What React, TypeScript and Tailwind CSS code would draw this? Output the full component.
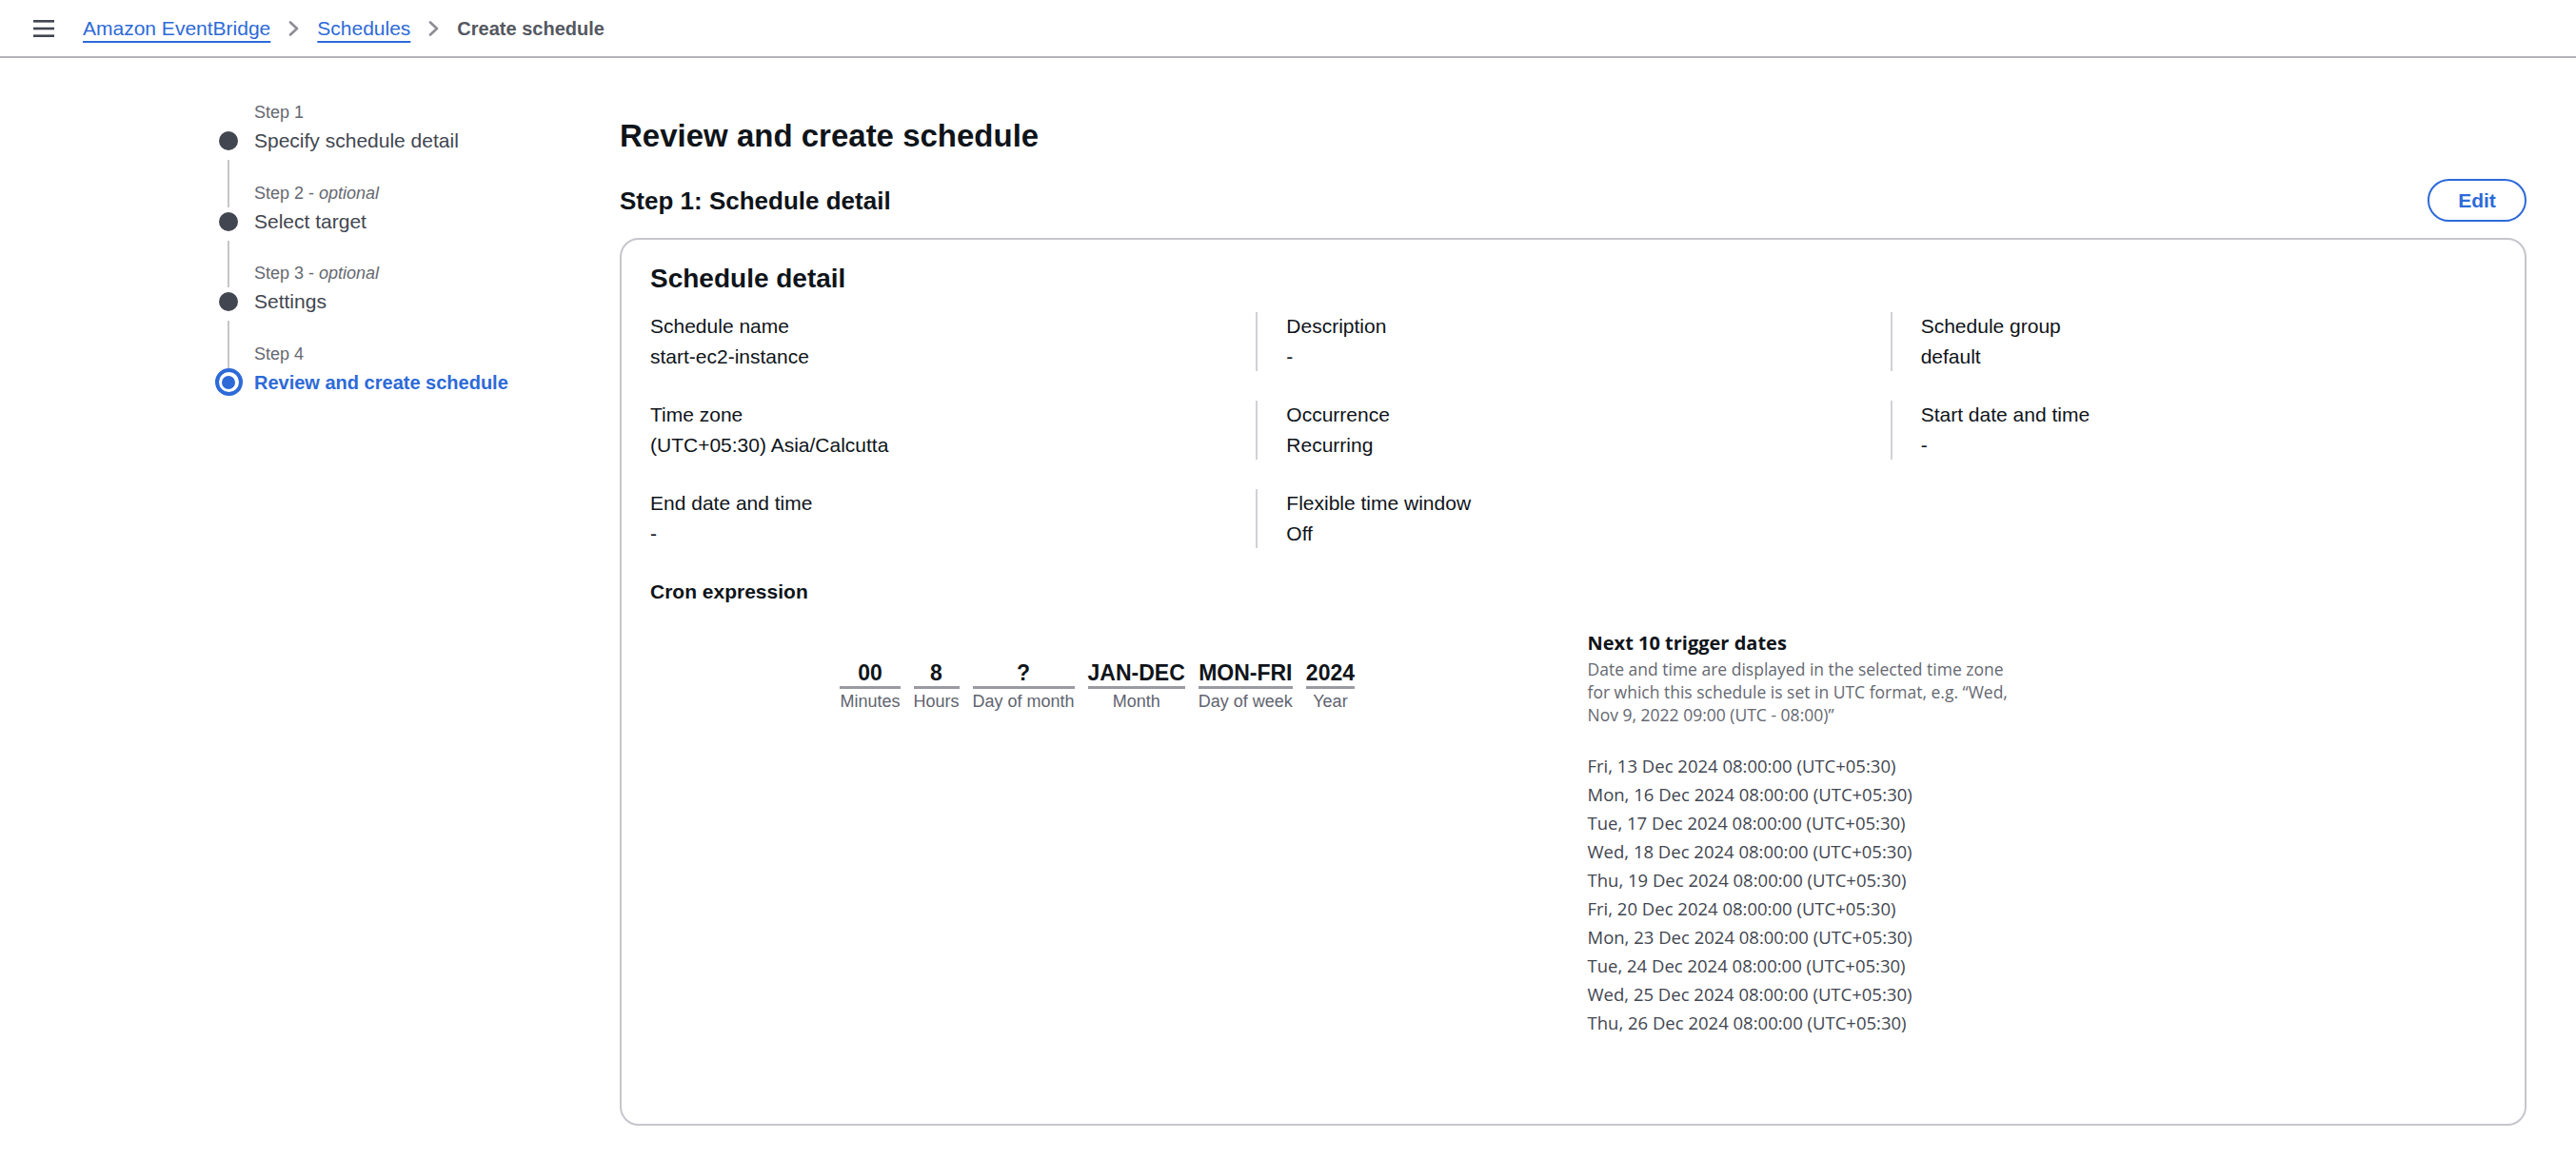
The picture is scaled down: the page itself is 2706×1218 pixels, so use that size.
import React from 'react';

type Step = { label: string; optional?: boolean; name: string; active?: boolean };

const steps: Step[] = [
  { label: 'Step 1', name: 'Specify schedule detail' },
  { label: 'Step 2', optional: true, name: 'Select target' },
  { label: 'Step 3', optional: true, name: 'Settings' },
  { label: 'Step 4', name: 'Review and create schedule', active: true },
];

const details = [
  { label: 'Schedule name', value: 'start-ec2-instance' },
  { label: 'Description', value: '-' },
  { label: 'Schedule group', value: 'default' },
  { label: 'Time zone', value: '(UTC+05:30) Asia/Calcutta' },
  { label: 'Occurrence', value: 'Recurring' },
  { label: 'Start date and time', value: '-' },
  { label: 'End date and time', value: '-' },
  { label: 'Flexible time window', value: 'Off' },
];

const cron = [
  { value: '00', label: 'Minutes' },
  { value: '8', label: 'Hours' },
  { value: '?', label: 'Day of month' },
  { value: 'JAN-DEC', label: 'Month' },
  { value: 'MON-FRI', label: 'Day of week' },
  { value: '2024', label: 'Year' },
];

const triggerDates = [
  'Fri, 13 Dec 2024 08:00:00 (UTC+05:30)',
  'Mon, 16 Dec 2024 08:00:00 (UTC+05:30)',
  'Tue, 17 Dec 2024 08:00:00 (UTC+05:30)',
  'Wed, 18 Dec 2024 08:00:00 (UTC+05:30)',
  'Thu, 19 Dec 2024 08:00:00 (UTC+05:30)',
  'Fri, 20 Dec 2024 08:00:00 (UTC+05:30)',
  'Mon, 23 Dec 2024 08:00:00 (UTC+05:30)',
  'Tue, 24 Dec 2024 08:00:00 (UTC+05:30)',
  'Wed, 25 Dec 2024 08:00:00 (UTC+05:30)',
  'Thu, 26 Dec 2024 08:00:00 (UTC+05:30)',
];

const Chevron = () => (
  <svg width="11" height="16" viewBox="0 0 11 16" fill="none" className="mx-[19px] shrink-0">
    <polyline points="2,1.5 9,8 2,14.5" stroke="#8d8d95" strokeWidth="2.6" strokeLinecap="round" strokeLinejoin="round" />
  </svg>
);

const Header = () => (
  <header className="flex h-[61px] items-center border-b-2 border-[#b4b4bb] pl-[35px]">
    <svg width="22" height="18" viewBox="0 0 22 18" className="mr-[30px] shrink-0">
      <rect x="0" y="0" width="22" height="2.6" fill="#414550" />
      <rect x="0" y="7.7" width="22" height="2.6" fill="#414550" />
      <rect x="0" y="15.4" width="22" height="2.6" fill="#414550" />
    </svg>
    <a className="text-[21px] leading-[30px] text-[#2d6ad8] underline decoration-2 underline-offset-[6px]">Amazon EventBridge</a>
    <Chevron />
    <a className="text-[21px] leading-[30px] text-[#2d6ad8] underline decoration-2 underline-offset-[6px]">Schedules</a>
    <Chevron />
    <span className="text-[20px] font-bold leading-[30px] text-[#545861]">Create schedule</span>
  </header>
);

const Steps = () => (
  <nav className="w-[426px] shrink-0 pt-[42px]">
    {steps.map((step, i) => (
      <div key={step.label} className="flex">
        {/* 点和连接线 */}
        <div className="flex w-[30px] shrink-0 flex-col items-center">
          <div className="flex h-[30px] justify-center">
            {i > 0 && <div className="h-full w-[2px] bg-[#c6c6cd]" />}
          </div>
          <div className="flex h-[30px] items-center justify-center">
            {step.active ? (
              <div className="flex h-[29px] w-[29px] items-center justify-center rounded-full border-[4px] border-[#2d6ad8]">
                <div className="h-[14px] w-[14px] rounded-full bg-[#2d6ad8]" />
              </div>
            ) : (
              <div className="h-[20px] w-[20px] rounded-full bg-[#424650]" />
            )}
          </div>
          <div className="flex flex-1 justify-center pt-[5px]">
            {i < steps.length - 1 && <div className="h-full w-[2px] bg-[#c6c6cd]" />}
          </div>
        </div>
        <div className="ml-[12px] pb-[24.5px]">
          <div className="text-[18px] leading-[30px] text-[#656871]">
            {step.label}
            {step.optional && (
              <>
                {' - '}
                <i>optional</i>
              </>
            )}
          </div>
          <div
            className={`leading-[30px] ${
              step.active ? 'text-[20px] font-bold text-[#2d6ad8]' : 'text-[21px] text-[#424650]'
            }`}
          >
            {step.name}
          </div>
        </div>
      </div>
    ))}
  </nav>
);

const DetailGrid = () => (
  <div className="mt-[17px] grid grid-cols-3 gap-y-[31px]">
    {details.map((d, i) => (
      <div key={d.label} className={`px-[30px] ${i % 3 === 0 ? '' : 'border-l-2 border-[#d1d1d6]'}`}>
        <div className="text-[21px] leading-[30px] text-[#0f141a]">{d.label}</div>
        <div className="mt-[2px] text-[21px] leading-[30px] text-[#0f141a]">{d.value}</div>
      </div>
    ))}
  </div>
);

const CronBlock = () => (
  <div className="flex justify-center pt-[32px]">
    <div className="flex items-start gap-x-[14px]">
      {cron.map((c) => (
        <div key={c.label} className="flex flex-col items-center">
          <div className="w-full border-b-[3px] border-[#9a9aa2] text-center text-[23px] font-bold leading-[28px] text-[#0f141a]">
            {c.value}
          </div>
          <div className="text-[18px] leading-[26px] text-[#5f6470]">{c.label}</div>
        </div>
      ))}
    </div>
  </div>
);

const TriggerDates = () => (
  <div className="pl-[15px] font-['Open_Sans',sans-serif]">
    <div className="text-[20px] font-bold leading-[30px] text-[#0f141a]">Next 10 trigger dates</div>
    <div className="text-[17.5px] leading-[24px] text-[#656871]">
      <div>Date and time are displayed in the selected time zone</div>
      <div>for which this schedule is set in UTC format, e.g. “Wed,</div>
      <div>Nov 9, 2022 09:00 (UTC - 08:00)”</div>
    </div>
    <div className="mt-[27px] text-[18.5px] leading-[30px] text-[#424650]">
      {triggerDates.map((t) => (
        <div key={t}>{t}</div>
      ))}
    </div>
  </div>
);

export default function App() {
  return (
    <div className="min-h-screen bg-white font-['Liberation_Sans',Arial,sans-serif] text-[#0f141a]">
      <Header />
      <div className="flex items-start pl-[225px] pr-[52px]">
        <Steps />
        <main className="min-w-0 flex-1 pt-[62px]">
          <h1 className="text-[33px] font-bold leading-[40px]">Review and create schedule</h1>
          <div className="mt-[25px] flex h-[45px] items-center justify-between">
            <h2 className="text-[26px] font-bold leading-[34px]">Step 1: Schedule detail</h2>
            <button className="h-[45px] w-[104px] rounded-full border-2 border-[#2d6ad8] text-[21px] font-bold text-[#2d6ad8]">
              Edit
            </button>
          </div>
          <section className="mt-[17px] rounded-[20px] border-2 border-[#c6c6cd] pb-[91px] pt-[23px]">
            <h3 className="px-[30px] text-[28px] font-bold leading-[36px]">Schedule detail</h3>
            <DetailGrid />
            <div className="mt-[31px] px-[30px] text-[21px] font-bold leading-[30px]">Cron expression</div>
            <div className="mt-[24px] grid grid-cols-2">
              <CronBlock />
              <TriggerDates />
            </div>
          </section>
        </main>
      </div>
    </div>
  );
}
